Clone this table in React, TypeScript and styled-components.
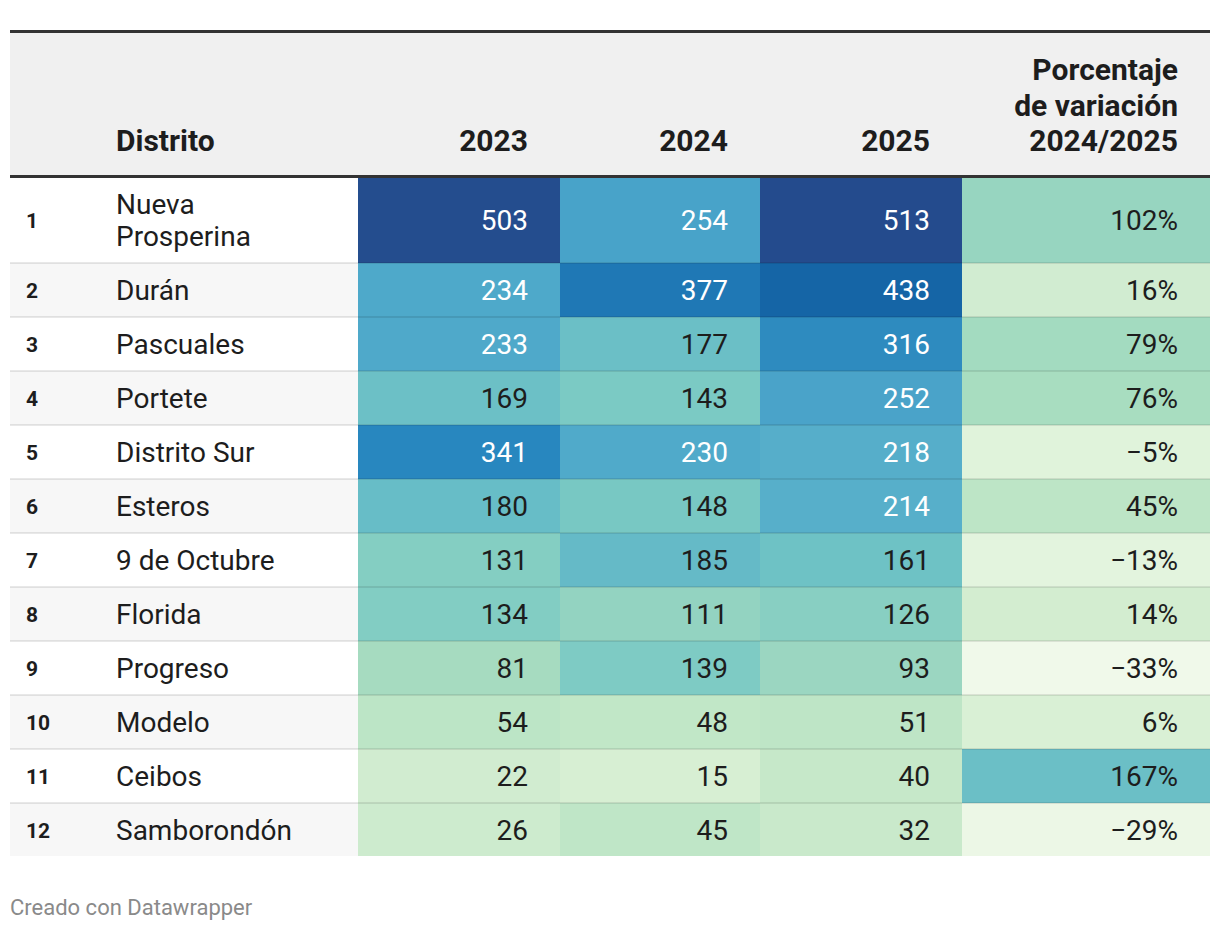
import styled, { createGlobalStyle } from 'styled-components'

const GlobalStyle = createGlobalStyle`
  html, body {
    margin: 0;
    padding: 0;
    background: #fff;
  }
  body {
    font-family: Roboto, "Liberation Sans", Arial, sans-serif;
    color: #1d1d1d;
  }
`

const Wrapper = styled.div`
  width: 1200px;
  padding: 30px 10px 0;
`

const Table = styled.table`
  width: 1200px;
  border-collapse: collapse;
  table-layout: fixed;
  border-top: 3px solid #333;
`

const HeadRow = styled.tr`
  background: #f0f0f0;
  border-bottom: 3px solid #333;
`

const HeadCell = styled.th<{ $align?: 'left' | 'right' }>`
  font-weight: 700;
  font-size: 30px;
  line-height: 35.5px;
  text-align: ${(p) => p.$align || 'right'};
  vertical-align: bottom;
  padding: 19px 32px 16px 16px;
  color: #1d1d1d;
`

const Row = styled.tr<{ $even: boolean }>`
  background: ${(p) => (p.$even ? '#f7f7f7' : '#fff')};
  border-bottom: 2px solid rgba(0, 0, 0, 0.09);

  &:last-child {
    border-bottom: none;
  }
`

const RankCell = styled.td`
  font-weight: 700;
  font-size: 21px;
  padding: 11px 0 9px 16px;
  vertical-align: middle;
  color: #1d1d1d;
`

const NameCell = styled.td`
  font-size: 28px;
  line-height: 32px;
  padding: 11px 50px 9px 16px;
  vertical-align: middle;
  color: #1d1d1d;
`

const ValueCell = styled.td<{ $bg: string; $light: boolean }>`
  background: ${(p) => p.$bg};
  color: ${(p) => (p.$light ? '#fff' : '#1d1d1d')};
  font-size: 28px;
  line-height: 32px;
  text-align: right;
  padding: 11px 32px 9px 0;
  vertical-align: middle;
`

const Credit = styled.div`
  margin-top: 39px;
  font-size: 22px;
  color: #8a8a8a;
`

type Cell = [string, string, boolean?]

const rows: { name: string; cells: Cell[] }[] = [
  { name: 'Nueva Prosperina', cells: [['503', '#244d8e', true], ['254', '#48a3c9', true], ['513', '#244b8d', true], ['102%', '#97d5c0']] },
  { name: 'Durán', cells: [['234', '#4ea9ca', true], ['377', '#1f78b5', true], ['438', '#1565a6', true], ['16%', '#d1ecd1']] },
  { name: 'Pascuales', cells: [['233', '#4fa9ca', true], ['177', '#6bbfc6'], ['316', '#2e8bbf', true], ['79%', '#a3dbc0']] },
  { name: 'Portete', cells: [['169', '#6cc0c6'], ['143', '#7bcac4'], ['252', '#4aa3c9', true], ['76%', '#a8ddc0']] },
  { name: 'Distrito Sur', cells: [['341', '#2887bf', true], ['230', '#50aaca', true], ['218', '#56aeca', true], ['−5%', '#e0f3db']] },
  { name: 'Esteros', cells: [['180', '#67bdc7'], ['148', '#78c8c3'], ['214', '#57afca', true], ['45%', '#bde5c6']] },
  { name: '9 de Octubre', cells: [['131', '#84cec2'], ['185', '#65bac7'], ['161', '#6ec2c5'], ['−13%', '#e3f4de']] },
  { name: 'Florida', cells: [['134', '#82cdc3'], ['111', '#93d3c1'], ['126', '#88cfc2'], ['14%', '#d3edd0']] },
  { name: 'Progreso', cells: [['81', '#a6dbc0'], ['139', '#7ecbc4'], ['93', '#9bd6c1'], ['−33%', '#f0f9ea']] },
  { name: 'Modelo', cells: [['54', '#bce5c6'], ['48', '#c1e7c7'], ['51', '#bee5c6'], ['6%', '#d9f0d5']] },
  { name: 'Ceibos', cells: [['22', '#d1ecd0'], ['15', '#d7efd3'], ['40', '#c6e8c9'], ['167%', '#6bbfc6']] },
  { name: 'Samborondón', cells: [['26', '#cdebce'], ['45', '#bfe6c7'], ['32', '#c9e9cb'], ['−29%', '#ecf7e6']] },
]

export default function App() {
  return (
    <Wrapper>
      <GlobalStyle />
      <Table>
        <colgroup>
          <col style={{ width: 90 }} />
          <col style={{ width: 258 }} />
          <col style={{ width: 202 }} />
          <col style={{ width: 200 }} />
          <col style={{ width: 202 }} />
          <col style={{ width: 248 }} />
        </colgroup>
        <thead>
          <HeadRow>
            <HeadCell $align="left" />
            <HeadCell $align="left">Distrito</HeadCell>
            <HeadCell>2023</HeadCell>
            <HeadCell>2024</HeadCell>
            <HeadCell>2025</HeadCell>
            <HeadCell>
              Porcentaje
              <br />
              de variación
              <br />
              2024/2025
            </HeadCell>
          </HeadRow>
        </thead>
        <tbody>
          {rows.map((r, i) => (
            <Row key={r.name} $even={i % 2 === 1}>
              <RankCell>{i + 1}</RankCell>
              <NameCell>{r.name}</NameCell>
              {r.cells.map(([v, bg, light]) => (
                <ValueCell key={v} $bg={bg} $light={!!light}>
                  {v}
                </ValueCell>
              ))}
            </Row>
          ))}
        </tbody>
      </Table>
      <Credit>Creado con Datawrapper</Credit>
    </Wrapper>
  )
}
